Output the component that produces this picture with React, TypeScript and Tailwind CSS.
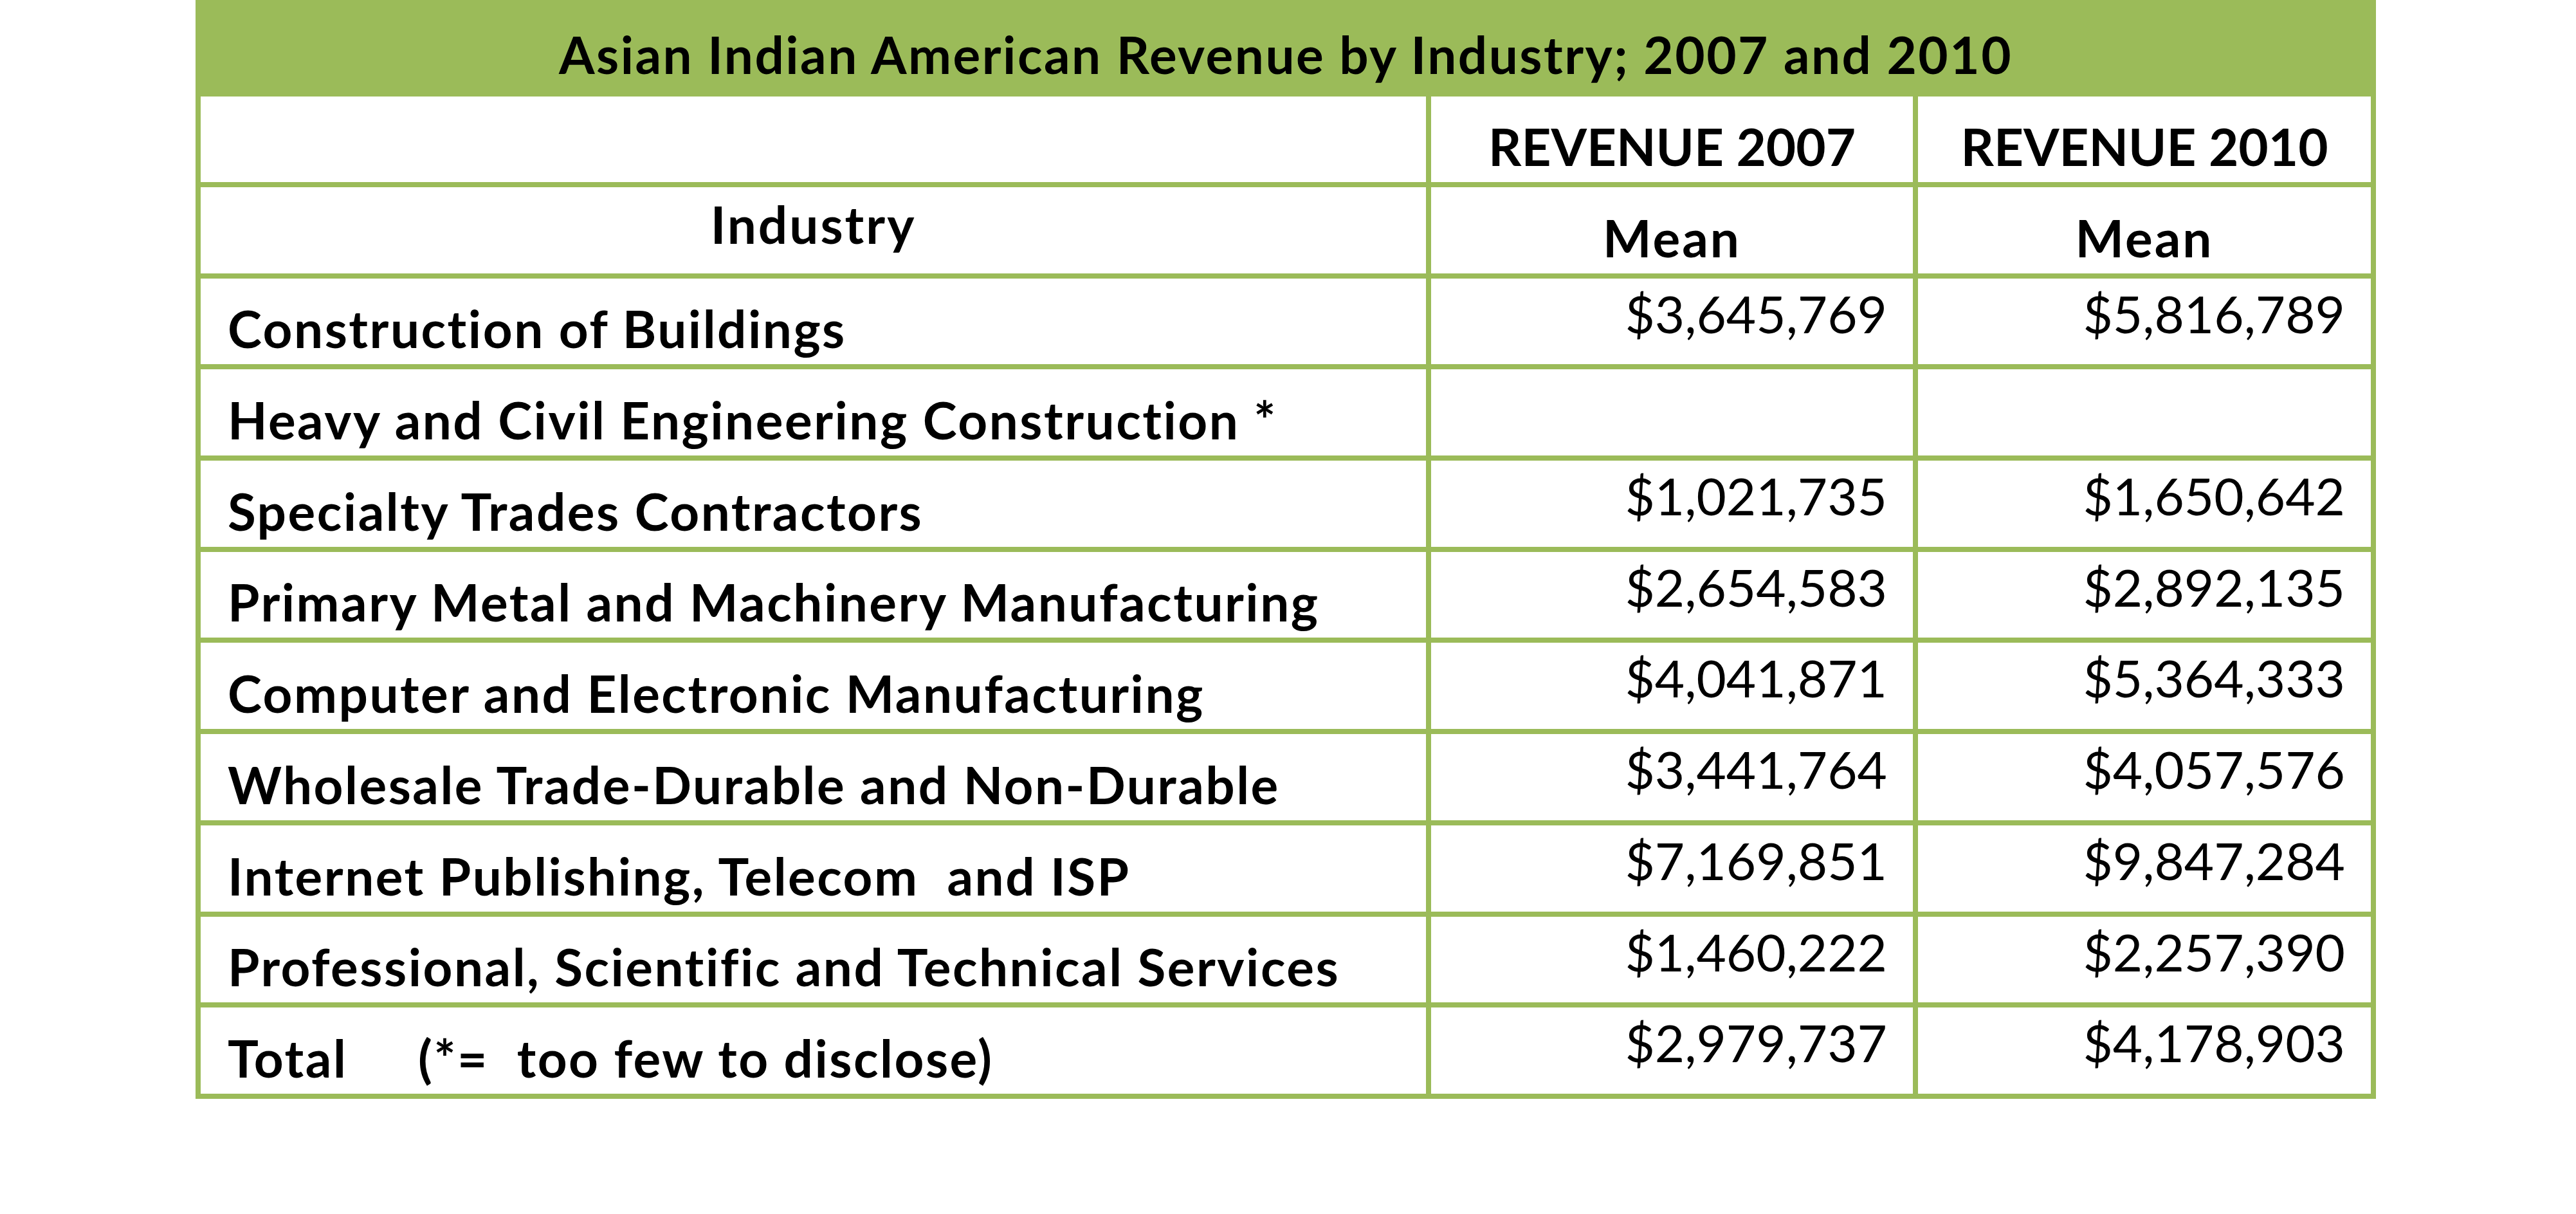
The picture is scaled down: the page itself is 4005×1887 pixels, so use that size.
import React from "react";

const rows = [
  { name: "Construction of Buildings", r2007: "$3,645,769", r2010: "$5,816,789" },
  { name: "Heavy and Civil Engineering Construction *", r2007: "", r2010: "" },
  { name: "Specialty Trades Contractors", r2007: "$1,021,735", r2010: "$1,650,642" },
  { name: "Primary Metal and Machinery Manufacturing", r2007: "$2,654,583", r2010: "$2,892,135" },
  { name: "Computer and Electronic Manufacturing", r2007: "$4,041,871", r2010: "$5,364,333" },
  { name: "Wholesale Trade-Durable and Non-Durable", r2007: "$3,441,764", r2010: "$4,057,576" },
  { name: "Internet Publishing, Telecom  and ISP", r2007: "$7,169,851", r2010: "$9,847,284" },
  { name: "Professional, Scientific and Technical Services", r2007: "$1,460,222", r2010: "$2,257,390" },
  { name: "Total     (*=  too few to disclose)", r2007: "$2,979,737", r2010: "$4,178,903" },
];

export default function App() {
  return (
    <div className="w-[4005px] h-[1887px] bg-white pl-[304px] font-['Lato',sans-serif] text-black">
      <div className="w-[3390px]">
        <div className="h-[150px] bg-[#9bbb59] pt-[44px] text-center text-[80px] font-bold leading-none tracking-[2.5px]">
          Asian Indian American Revenue by Industry; 2007 and 2010
        </div>

        <div className="grid grid-cols-[1905px_749px_704px] grid-rows-[133px_repeat(10,133.7px)] gap-[8px] bg-[#9bbb59] px-[8px] pb-[8px] text-[80px] leading-none">
          <div className="bg-white" />
          <div className="flex items-end justify-center bg-white pb-[16px] font-bold">REVENUE 2007</div>
          <div className="flex items-end justify-center bg-white pb-[16px] font-bold">REVENUE 2010</div>

          <div className="flex items-start justify-center bg-white pt-[17px] font-bold tracking-[3px]">Industry</div>
          <div className="flex items-end justify-center bg-white pb-[16px] font-bold tracking-[3px]">Mean</div>
          <div className="flex items-end justify-center bg-white pb-[16px] font-bold tracking-[3px]">Mean</div>

          {rows.map((row) => (
            <React.Fragment key={row.name}>
              <div className="flex items-end bg-white pl-[42px] pb-[16px] font-bold whitespace-pre tracking-[2.5px]">
                {row.name}
              </div>
              <div className="flex items-start justify-end bg-white pr-[40px] pt-[14px]">{row.r2007}</div>
              <div className="flex items-start justify-end bg-white pr-[40px] pt-[14px]">{row.r2010}</div>
            </React.Fragment>
          ))}
        </div>
      </div>
    </div>
  );
}
